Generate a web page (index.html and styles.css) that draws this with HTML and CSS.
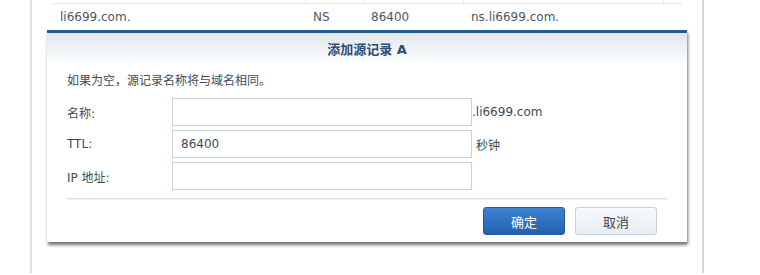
FILE: index.html
```html
<!DOCTYPE html>
<html lang="zh-CN">
<head>
    <meta charset="UTF-8">
    <title>添加源记录 A</title>
    <link rel="stylesheet" href="styles.css">
</head>
<body>
    <div class="panel">
        <table class="records">
            <tr class="head-row">
                <td class="c-name"></td>
                <td class="c-type"></td>
                <td class="c-ttl"></td>
                <td class="c-value"></td>
                <td class="c-pad"></td>
            </tr>
            <tr class="rec-row">
                <td>li6699.com.</td>
                <td>NS</td>
                <td>86400</td>
                <td>ns.li6699.com.</td>
                <td></td>
            </tr>
        </table>
    </div>

    <div class="dialog">
        <div class="dialog-head">添加源记录 A</div>
        <div class="dialog-body">
            <p class="hint">如果为空，源记录名称将与域名相同。</p>
            <div class="field">
                <label class="field-label">名称:</label>
                <input class="field-input" type="text">
                <span class="suffix">.li6699.com</span>
            </div>
            <div class="field">
                <label class="field-label">TTL:</label>
                <input class="field-input" type="text" value="86400">
                <span class="suffix unit">秒钟</span>
            </div>
            <div class="field">
                <label class="field-label">IP 地址:</label>
                <input class="field-input" type="text">
            </div>
        </div>
        <div class="dialog-foot">
            <button class="btn btn-primary">确定</button>
            <button class="btn btn-default">取消</button>
        </div>
    </div>
</body>
</html>
```

FILE: styles.css
```css
html, body {
    margin: 0;
    height: 100%;
}
body {
    font-family: "DejaVu Sans", "Noto Sans CJK SC", sans-serif;
    font-size: 12px;
    color: #414b55;
    background: #fff;
    overflow: hidden;
}
.panel {
    margin-left: 30px;
    width: 670px;
    height: 273px;
    border-left: 2px solid #e0e0e0;
    border-right: 2px solid #d6d6d6;
    overflow: hidden;
}
.records {
    margin: -19px 20px 0;
    width: 630px;
    border-collapse: collapse;
    table-layout: fixed;
}
.records td {
    box-sizing: border-box;
    padding: 0 0 0 8px;
    white-space: nowrap;
    color: #4c5764;
}
.c-name { width: 253px; }
.c-type { width: 58px; }
.c-ttl { width: 100px; }
.c-value { width: 200px; }
.head-row td {
    height: 22px;
    border-bottom: 1px solid #e4e8ec;
    border-right: 1px solid #e4e8ec;
}
.head-row td:last-child {
    border-right: none;
}
.rec-row td {
    height: 28px;
}

.dialog {
    position: absolute;
    left: 47px;
    top: 30px;
    width: 640px;
    height: 209px;
    background: #fff;
    border-top: 3px solid #285a8f;
    box-shadow: 1px 3px 3px rgba(0, 0, 0, 0.55);
}
.dialog-head {
    height: 32px;
    line-height: 33px;
    text-align: center;
    font-size: 13px;
    font-weight: bold;
    color: #2d4c75;
    background: linear-gradient(#e0e7ef, #ffffff);
}
.dialog-body {
    padding: 8px 20px 8px;
}
.hint {
    margin: 0 0 9px;
    line-height: 16px;
}
.field {
    display: flex;
    align-items: center;
    height: 28px;
    margin-bottom: 4px;
}
.field:last-child {
    margin-bottom: 0;
}
.field-label {
    width: 105px;
    flex-shrink: 0;
}
.field-input {
    box-sizing: border-box;
    width: 300px;
    height: 28px;
    margin: 0;
    padding: 0 8px;
    border: 1px solid #c6d1dd;
    font-family: inherit;
    font-size: 12px;
    color: #414b55;
    outline: none;
}
.suffix {
    margin-left: 0;
}
.suffix.unit {
    margin-left: 4px;
}
.dialog-foot {
    margin: 0 20px;
    padding: 8px 10px 0 0;
    border-top: 1px solid #d8dde3;
    box-shadow: inset 0 1px 0 #eef0f3;
    display: flex;
    justify-content: flex-end;
    gap: 10px;
}
.btn {
    box-sizing: border-box;
    width: 82px;
    height: 28px;
    border-radius: 3px;
    font-family: inherit;
    font-size: 13px;
    cursor: pointer;
}
.btn-primary {
    color: #fff;
    border: 1px solid #2556a0;
    background: linear-gradient(#3c82d2, #2461ae);
}
.btn-default {
    color: #3c4650;
    border: 1px solid #c2cfdc;
    background: linear-gradient(#f8fafc, #e6edf4);
}
```
